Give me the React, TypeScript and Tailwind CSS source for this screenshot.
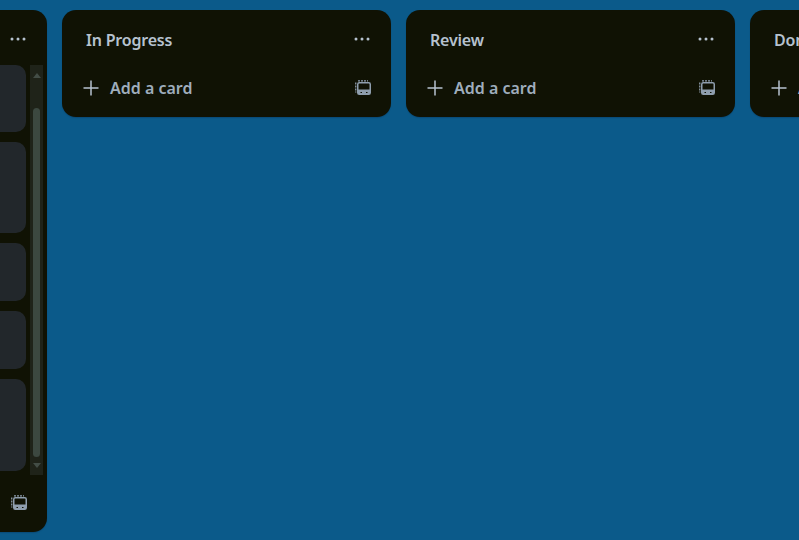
const font = { fontFamily: '"Noto Sans", "Open Sans", sans-serif' };

function DotsIcon() {
  return (
    <svg width="16" height="4" viewBox="0 0 16 4" fill="#b6c2cf" className="mb-[2px] shrink-0">
      <circle cx="2" cy="2" r="1.5" />
      <circle cx="8" cy="2" r="1.5" />
      <circle cx="14" cy="2" r="1.5" />
    </svg>
  );
}

function PlusIcon() {
  return (
    <svg width="16" height="16" viewBox="0 0 16 16" stroke="#b6c2cf" strokeWidth="1.5" className="shrink-0">
      <path d="M8 .5v15M.5 8h15" />
    </svg>
  );
}

function TemplateIcon() {
  return (
    <svg width="16" height="16" viewBox="0 0 16 16" fill="none" stroke="#8f9eae" className="shrink-0">
      <rect x="2.75" y="2.75" width="12.5" height="11.5" rx="1.5" strokeWidth="1.5" />
      <path d="M3 10.25h12" strokeWidth="1.5" />
      <rect x="3" y="10.5" width="12" height="3.5" fill="#8f9eae" stroke="none" />
      <path d="M5.5 12.5h1.5M11 12.5h1.5" stroke="#101204" strokeWidth="1" />
      <path d="M.75 2.5v10" strokeWidth="1.25" strokeDasharray="2 1" />
      <path d="M3 .75h10" strokeWidth="1.25" strokeDasharray="2 1" />
    </svg>
  );
}

function Header({ title }: { title: string }) {
  return (
    <div className="flex items-center justify-between pl-6 pr-[21px] h-[60px]">
      <h2 className="text-base font-semibold tracking-[-0.2px] text-[#b6c2cf]">{title}</h2>
      <DotsIcon />
    </div>
  );
}

function Footer() {
  return (
    <div className="flex items-center justify-between pl-[21px] pr-5 h-[36px]">
      <div className="flex items-center gap-[11px] text-base font-semibold text-[#9fadbc]">
        <PlusIcon />
        <span>Add a card</span>
      </div>
      <TemplateIcon />
    </div>
  );
}

function Column({ title }: { title: string }) {
  return (
    <section className="w-[329px] shrink-0 rounded-[14px] bg-[#101204] pb-[11px] shadow-[0_1px_1px_#091e4240]">
      <Header title={title} />
      <Footer />
    </section>
  );
}

const cardHeights = ["h-[67px]", "h-[91px]", "h-[58px]", "h-[58px]", "h-[92px]"];

function ScrollColumn({ title }: { title: string }) {
  return (
    <section className="w-[329px] shrink-0 rounded-[14px] bg-[#101204] pb-[11px] shadow-[0_1px_1px_#091e4240]">
      <Header title={title} />
      <div className="-mt-[5px] mb-[10px] flex h-[410px] overflow-hidden">
        <div className="flex flex-1 flex-col justify-end gap-[10px] overflow-hidden pb-1 pl-2">
          {cardHeights.map((height, i) => (
            <div key={i} className={`${height} shrink-0 rounded-[10px] bg-[#22272b]`} />
          ))}
        </div>
        <div className="ml-1 mr-1 flex w-[13px] shrink-0 flex-col items-center bg-[#1f2319]">
          <div className="mt-[8px] h-0 w-0 border-x-[4px] border-b-[5px] border-x-transparent border-b-[#434d46]" />
          <div className="mt-[30px] w-[7px] flex-1 rounded-full bg-[#3c4840]" />
          <div className="mb-[7px] mt-[6px] h-0 w-0 border-x-[4px] border-t-[5px] border-x-transparent border-t-[#434d46]" />
        </div>
      </div>
      <Footer />
    </section>
  );
}

export default function App() {
  return (
    <div className="h-[540px] w-[799px] overflow-hidden bg-[#0b5a8a] pt-[10px]" style={font}>
      <div className="-ml-[282px] flex items-start gap-[15px]">
        <ScrollColumn title="To Do" />
        <Column title="In Progress" />
        <Column title="Review" />
        <Column title="Done" />
      </div>
    </div>
  );
}
